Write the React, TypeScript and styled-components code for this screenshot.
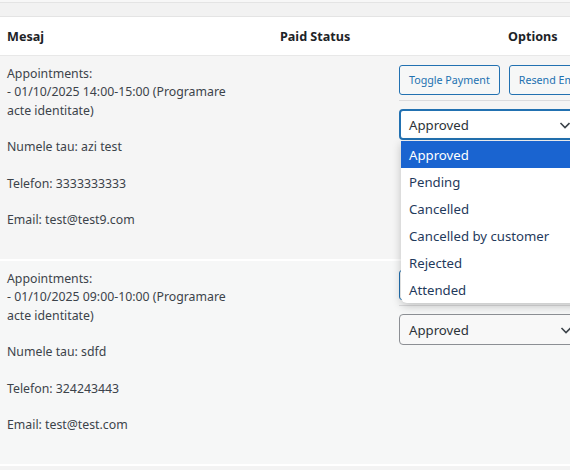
import styled, { createGlobalStyle } from "styled-components";

const GlobalStyle = createGlobalStyle`
    html, body {
        margin: 0;
        padding: 0;
        background: #f3f3f3;
        overflow: hidden;
    }
    body {
        font-family: "Noto Sans", "Open Sans", sans-serif;
        font-size: 12.3px;
        color: #3c434a;
    }
`;

const TopBar = styled.div`
    height: 14px;
    border-top: 2px solid #f7f7f7;
    box-shadow: inset 0 1px 0 #e4e4e4;
    border-bottom: 1px solid #e4e4e4;
    background: #f2f2f2;
`;

const Table = styled.div`
    width: 690px;
    display: flex;
    flex-direction: column;
`;

const Row = styled.div<{ $header?: boolean; $tint?: string }>`
    display: grid;
    grid-template-columns: 273px 119px 298px;
    background: ${(p) => (p.$header ? "#fff" : p.$tint ?? "#f6f6f6")};
    border-bottom: ${(p) => (p.$header ? "1px solid #e8e8e8" : "2px solid #fff")};
    box-shadow: ${(p) => (p.$header ? "0 1px 2px rgba(0,0,0,0.05)" : "none")};
`;

const HeadCell = styled.div<{ $indent?: number }>`
    height: 38px;
    display: flex;
    align-items: center;
    padding: 0 7px;
    padding-left: ${(p) => p.$indent ?? 7}px;
    font-weight: 700;
    font-size: 12.6px;
    color: #1d2327;
`;

const Message = styled.div`
    padding: 9px 7px 8px;
    line-height: 18.25px;
    white-space: pre-line;
    min-height: 186px;
`;

const Cell = styled.div`
    padding: 9px 7px;
`;

const OptionsCell = styled.div`
    padding: 9px 7px;
    display: flex;
    flex-direction: column;
`;

const ButtonRow = styled.div`
    display: flex;
    gap: 9px;
    padding-bottom: 5px;
    border-bottom: 1px solid #dcdcde;
    margin-bottom: 8px;
`;

const Button = styled.button`
    height: 30px;
    padding: 0 9px;
    font-family: inherit;
    font-size: 10.7px;
    color: #2271b1;
    background: #f6f7f7;
    border: 1px solid #2271b1;
    border-radius: 3px;
    white-space: nowrap;
`;

const SelectWrap = styled.div`
    position: relative;
    width: 183px;
`;

const Select = styled.div<{ $focused?: boolean }>`
    height: 31px;
    box-sizing: border-box;
    display: flex;
    align-items: center;
    justify-content: space-between;
    padding: 0 8px 0 ${(p) => (p.$focused ? 8 : 9)}px;
    font-size: 13.2px;
    color: #2c3338;
    background: ${(p) => (p.$focused ? "#fff" : "#f8f8f8")};
    border: ${(p) => (p.$focused ? "2px solid #2271b1" : "1px solid #8c8f94")};
    border-radius: 4px;
`;

const Chevron = () => (
    <svg width="14" height="14" viewBox="0 0 14 14" fill="none">
        <path d="M2.5 5 L7 9.5 L11.5 5" stroke="#3c434a" strokeWidth="1.6" />
    </svg>
);

const Popup = styled.ul`
    position: absolute;
    left: 2px;
    top: calc(100% + 1px);
    width: 200px;
    margin: 0;
    padding: 0;
    list-style: none;
    background: #fff;
    border-radius: 0 0 6px 6px;
    box-shadow: 0 3px 10px rgba(0, 0, 0, 0.22);
    z-index: 5;
    overflow: hidden;
`;

const PopupItem = styled.li<{ $active?: boolean }>`
    height: 27px;
    display: flex;
    align-items: center;
    padding-left: 8px;
    font-size: 13.2px;
    color: ${(p) => (p.$active ? "#fff" : "#1f3a5c")};
    background: ${(p) => (p.$active ? "#1a64d0" : "transparent")};
`;

const statuses = ["Approved", "Pending", "Cancelled", "Cancelled by customer", "Rejected", "Attended"];

const bookings = [
    {
        slot: "01/10/2025 14:00-15:00",
        name: "azi test",
        phone: "3333333333",
        email: "test@test9.com",
        open: true,
        tint: "#f5f5f5"
    },
    {
        slot: "01/10/2025 09:00-10:00",
        name: "sdfd",
        phone: "324243443",
        email: "test@test.com",
        open: false,
        tint: "#f6f7f7"
    }
];

export default function App() {
    return (
        <>
            <GlobalStyle />
            <TopBar />
            <Table>
                <Row $header>
                    <HeadCell>Mesaj</HeadCell>
                    <HeadCell>Paid Status</HeadCell>
                    <HeadCell $indent={116}>Options</HeadCell>
                </Row>
                {bookings.map((b) => (
                    <Row key={b.slot} $tint={b.tint}>
                        <Message>
                            {`Appointments:\n- ${b.slot} (Programare\nacte identitate)\n\nNumele tau: ${b.name}\n\nTelefon: ${b.phone}\n\nEmail: ${b.email}`}
                        </Message>
                        <Cell />
                        <OptionsCell>
                            <ButtonRow>
                                <Button>Toggle Payment</Button>
                                <Button>Resend Email</Button>
                            </ButtonRow>
                            <SelectWrap>
                                <Select $focused={b.open}>
                                    <span>Approved</span>
                                    <Chevron />
                                </Select>
                                {b.open && (
                                    <Popup>
                                        {statuses.map((s, i) => (
                                            <PopupItem key={s} $active={i === 0}>
                                                {s}
                                            </PopupItem>
                                        ))}
                                    </Popup>
                                )}
                            </SelectWrap>
                        </OptionsCell>
                    </Row>
                ))}
            </Table>
        </>
    );
}
